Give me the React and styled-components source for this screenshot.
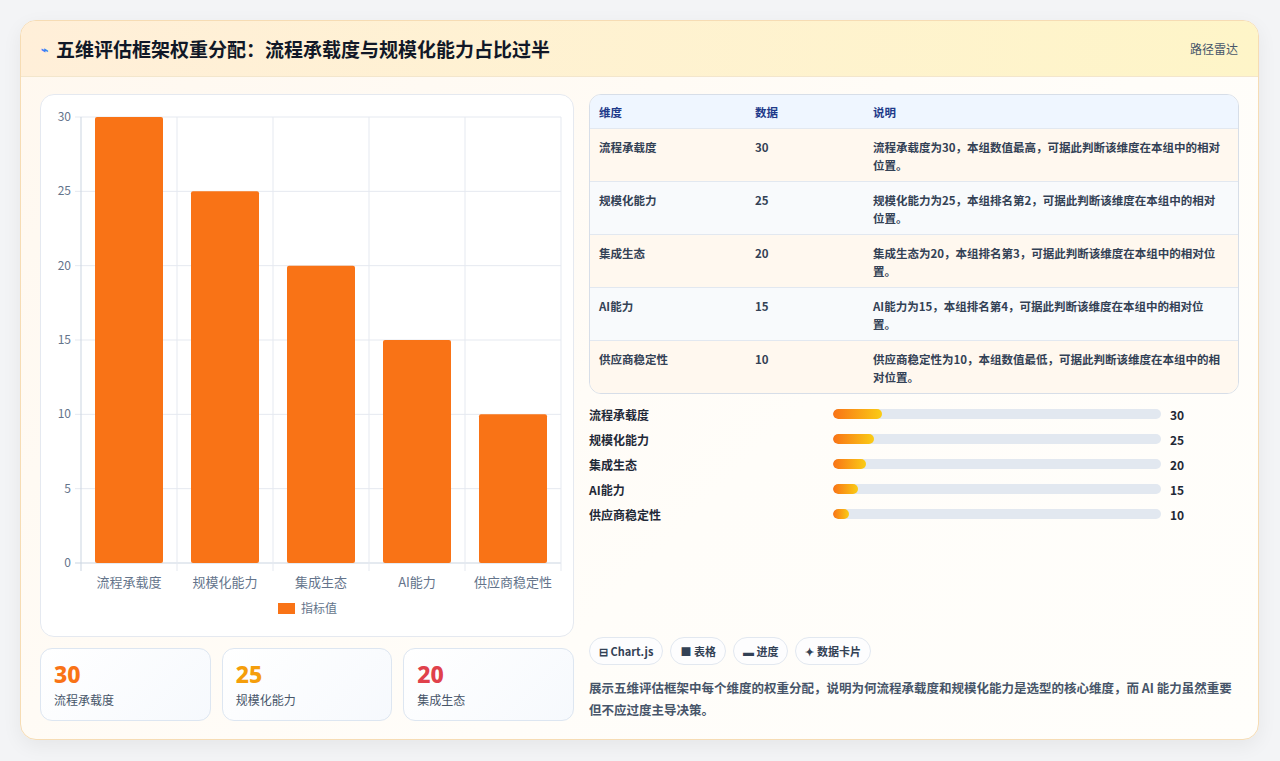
import React from "react";
import styled, { createGlobalStyle } from "styled-components";

const G = createGlobalStyle`
  body{margin:0;background:#f3f4f6;font-family:"Noto Sans CJK SC","Noto Sans",sans-serif;}
`;
const data = [
  ["流程承载度", 30, "流程承载度为30，本组数值最高，可据此判断该维度在本组中的相对位置。"],
  ["规模化能力", 25, "规模化能力为25，本组排名第2，可据此判断该维度在本组中的相对位置。"],
  ["集成生态", 20, "集成生态为20，本组排名第3，可据此判断该维度在本组中的相对位置。"],
  ["AI能力", 15, "AI能力为15，本组排名第4，可据此判断该维度在本组中的相对位置。"],
  ["供应商稳定性", 10, "供应商稳定性为10，本组数值最低，可据此判断该维度在本组中的相对位置。"],
];
const Page = styled.div`padding:20px 21px 21px 20px;height:761px;box-sizing:border-box;background:#f3f4f6;`;
const Card = styled.div`height:720px;box-sizing:border-box;border:1px solid #f6dcb4;border-radius:16px;overflow:hidden;display:flex;flex-direction:column;
  background:linear-gradient(135deg,#fff8ef 0%,#fffdf9 60%,#fffefb 100%);box-shadow:0 6px 20px rgba(0,0,0,.06);`;
const Header = styled.div`height:55px;flex:none;display:flex;align-items:center;justify-content:space-between;padding:0 20px;
  background:linear-gradient(90deg,#ffefd9,#fef5c8);border-bottom:1px solid #f3e6cc;`;
const Title = styled.h1`margin:0;font-size:19px;font-weight:700;color:#111827;display:flex;align-items:center;gap:8px;`;
const Bolt = styled.span`color:#3b82f6;font-size:12px;`;
const Tag = styled.span`font-size:12px;color:#475569;`;
const Body = styled.div`flex:1;display:flex;gap:15px;padding:17px 19px 18px 19px;min-height:0;`;
const Left = styled.div`width:534px;display:flex;flex-direction:column;gap:11px;`;
const ChartBox = styled.div`flex:1;background:#fff;border:1px solid #e5e9f0;border-radius:14px;overflow:hidden;`;
const Stats = styled.div`display:grid;grid-template-columns:repeat(3,1fr);gap:11px;height:73px;`;
const Stat = styled.div`border:1px solid #dde6f1;border-radius:12px;background:linear-gradient(135deg,#fff,#f6f9fd);padding:10px 13px;`;
const StatNum = styled.div`font-size:23px;font-weight:800;color:${p=>p.c};line-height:30px;font-family:"Noto Sans",sans-serif;`;
const StatLbl = styled.div`font-size:12px;color:#475569;margin-top:2px;`;
const Right = styled.div`flex:1;display:flex;flex-direction:column;`;
const Table = styled.div`border:1px solid #d7dee8;border-radius:12px;overflow:hidden;font-size:11.5px;font-weight:600;color:#334155;`;
const Row = styled.div`display:grid;grid-template-columns:156px 118px 1fr;padding:0 16px 0 9px;min-height:${p=>p.h}px;box-sizing:border-box;
  background:${p=>p.bg};border-top:${p=>p.first?"none":"1px solid #e2e8f0"};align-items:${p=>p.head?"center":"start"};padding-top:${p=>p.head?0:9}px;
  color:${p=>p.head?"#1e3a8a":"#334155"};line-height:18px;`;
const Bars = styled.div`display:flex;flex-direction:column;gap:7px;margin-top:11px;`;
const BarRow = styled.div`display:grid;grid-template-columns:244px 337px 1fr;align-items:center;gap:0;height:18px;font-size:12px;font-weight:600;color:#1f2937;`;
const Track = styled.div`height:10px;background:#e2e8f0;border-radius:5px;overflow:hidden;margin-right:9px;`;
const Fill = styled.div`height:100%;border-radius:5px;background:linear-gradient(90deg,#f97316,#facc15);`;
const Val = styled.span`font-weight:700;font-size:12px;padding-left:0;`;
const Chips = styled.div`margin-top:auto;display:flex;gap:7px;`;
const Chip = styled.span`border:1px solid #e2e8f0;background:#fdfdfe;border-radius:14px;padding:5px 9px;font-size:11px;font-weight:700;color:#334155;`;
const Desc = styled.p`margin:12px 0 0;font-size:12.5px;font-weight:600;color:#475569;line-height:22px;`;

function Chart(){
  const x0=40,x1=520,y0=22,y1=468,u=(y1-y0)/30,w=(x1-x0)/5;
  return (
    <svg width="534" height="543" viewBox="0 0 534 543" style={{display:"block"}} fontFamily="Noto Sans CJK SC, sans-serif">
      {[0,5,10,15,20,25,30].map(v=>{const y=y1-v*u;return <g key={v}>
        <line x1={x0-6} x2={x1} y1={y} y2={y} stroke={v===0?"#cbd5e1":"#e5e9f0"}/>
        <text x={x0-10} y={y+4} fontSize="12" fill="#64748b" textAnchor="end">{v}</text></g>;})}
      {[0,1,2,3,4,5].map(i=><line key={i} x1={x0+i*w} x2={x0+i*w} y1={y0} y2={y1+8} stroke={i===0?"#cbd5e1":"#e5e9f0"}/>)}
      {data.map((d,i)=><g key={i}>
        <rect x={x0+i*w+14} y={y1-d[1]*u} width={w-28} height={d[1]*u} fill="#f97316" rx="2"/>
        <text x={x0+i*w+w/2} y={y1+24} fontSize="13" fill="#64748b" textAnchor="middle">{d[0]}</text></g>)}
      <rect x="237" y="508" width="17" height="11" fill="#f97316"/>
      <text x="260" y="518" fontSize="12" fill="#64748b">指标值</text>
    </svg>);
}

export default function App(){
  return <Page><G/><Card>
    <Header><Title><Bolt>⌁</Bolt>五维评估框架权重分配：流程承载度与规模化能力占比过半</Title><Tag>路径雷达</Tag></Header>
    <Body>
      <Left>
        <ChartBox><Chart/></ChartBox>
        <Stats>
          <Stat><StatNum c="#f97316">30</StatNum><StatLbl>流程承载度</StatLbl></Stat>
          <Stat><StatNum c="#f59e0b">25</StatNum><StatLbl>规模化能力</StatLbl></Stat>
          <Stat><StatNum c="#e0414b">20</StatNum><StatLbl>集成生态</StatLbl></Stat>
        </Stats>
      </Left>
      <Right>
        <Table>
          <Row head first h={33} bg="#eff6ff"><span>维度</span><span>数据</span><span>说明</span></Row>
          {data.map((d,i)=><Row key={i} h={53} bg={i%2?"#f8fafc":"#fff8ef"}><span>{d[0]}</span><span>{d[1]}</span><span>{d[2]}</span></Row>)}
        </Table>
        <Bars>
          {data.map((d,i)=><BarRow key={i}><span>{d[0]}</span><Track><Fill style={{width:`${d[1]/2}%`}}/></Track><Val>{d[1]}</Val></BarRow>)}
        </Bars>
        <Chips><Chip>⊟ Chart.js</Chip><Chip>■ 表格</Chip><Chip>▬ 进度</Chip><Chip>✦ 数据卡片</Chip></Chips>
        <Desc>展示五维评估框架中每个维度的权重分配，说明为何流程承载度和规模化能力是选型的核心维度，而 AI 能力虽然重要但不应过度主导决策。</Desc>
      </Right>
    </Body>
  </Card></Page>;
}
